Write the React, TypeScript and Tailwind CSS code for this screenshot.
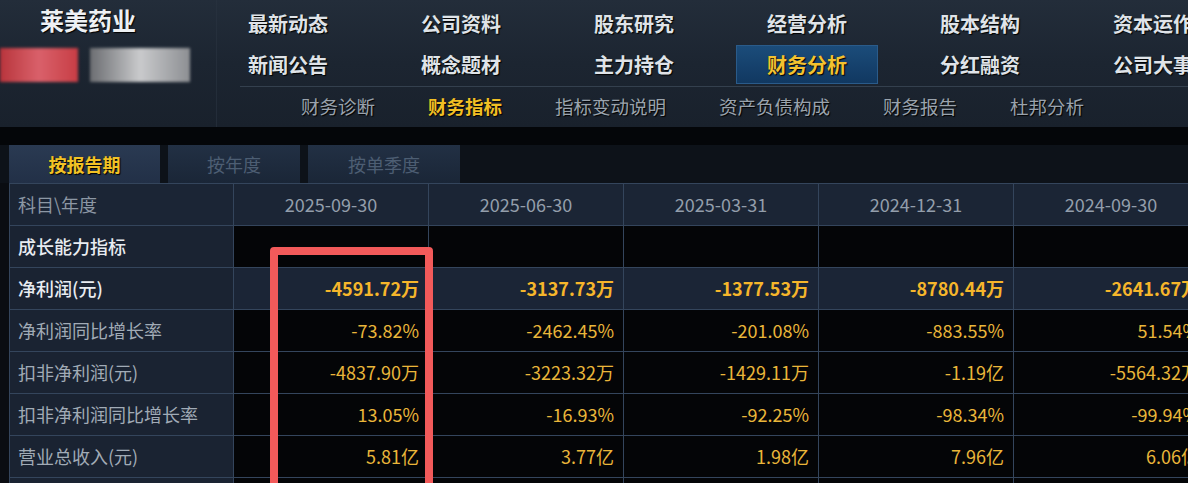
const topNav = ["最新动态", "公司资料", "股东研究", "经营分析", "股本结构", "资本运作"];
const bottomNav = ["新闻公告", "概念题材", "主力持仓", "财务分析", "分红融资", "公司大事"];
const subNav = ["财务诊断", "财务指标", "指标变动说明", "资产负债构成", "财务报告", "杜邦分析"];
const dates = ["2025-09-30", "2025-06-30", "2025-03-31", "2024-12-31", "2024-09-30"];

type Row = { label: string; values: string[]; kind: "section" | "main" | "normal" };

const rows: Row[] = [
  { label: "成长能力指标", values: ["", "", "", "", ""], kind: "section" },
  { label: "净利润(元)", values: ["-4591.72万", "-3137.73万", "-1377.53万", "-8780.44万", "-2641.67万"], kind: "main" },
  { label: "净利润同比增长率", values: ["-73.82%", "-2462.45%", "-201.08%", "-883.55%", "51.54%"], kind: "normal" },
  { label: "扣非净利润(元)", values: ["-4837.90万", "-3223.32万", "-1429.11万", "-1.19亿", "-5564.32万"], kind: "normal" },
  { label: "扣非净利润同比增长率", values: ["13.05%", "-16.93%", "-92.25%", "-98.34%", "-99.94%"], kind: "normal" },
  { label: "营业总收入(元)", values: ["5.81亿", "3.77亿", "1.98亿", "7.96亿", "6.06亿"], kind: "normal" },
  { label: "", values: ["", "", "", "", ""], kind: "normal" },
];

const font = "font-['Noto_Sans_CJK_SC','Noto_Sans',sans-serif]";
const shadow = "[text-shadow:1px_1px_1px_#000]";

function Header() {
  return (
    <div className="h-[127px] flex bg-gradient-to-b from-[#232d3a] via-[#1c2531] to-[#19212c]">
      <div className="w-[217px] shrink-0 border-r border-[#2a3441]/60">
        <div className={`pl-[40px] pt-[5px] text-[24px] leading-[30px] font-bold text-[#eef1f4] ${shadow}`}>
          莱美药业
        </div>
        <div className="mt-[13px] flex gap-[12px]">
          <div className="w-[78px] h-[34px] bg-gradient-to-r from-[#b8343c] via-[#d9606a] to-[#c73c44] blur-[1.5px]" />
          <div className="w-[100px] h-[34px] bg-gradient-to-r from-[#6c6e72] via-[#c9cacc] to-[#8d8f93] blur-[1.5px]" />
        </div>
      </div>
      <div className="flex-1 flex flex-col min-w-0">
        <div className="h-[45px] grid grid-cols-[repeat(6,142px)] gap-x-[31px] items-center pt-[2px]">
          {topNav.map((t) => (
            <div key={t} className={`text-center text-[20px] font-bold text-[#dfe3e8] ${shadow} whitespace-nowrap`}>
              {t}
            </div>
          ))}
        </div>
        <div className="h-[41px] grid grid-cols-[repeat(6,142px)] gap-x-[31px]">
          {bottomNav.map((t) => {
            const active = t === "财务分析";
            return (
              <div
                key={t}
                className={`h-[39px] flex items-center justify-center text-[20px] font-bold whitespace-nowrap ${shadow} ${
                  active
                    ? "bg-gradient-to-b from-[#1b4c7a] to-[#113861] border border-[#2a5b8a] text-[#f3c230]"
                    : "text-[#dfe3e8]"
                }`}
              >
                {t}
              </div>
            );
          })}
        </div>
        <div className="ml-[23px] h-px bg-[#34404e]" />
        <div className="flex-1 flex items-center pl-[84px] gap-[53px]">
          {subNav.map((t) => {
            const active = t === "财务指标";
            return (
              <div
                key={t}
                className={`text-[18.5px] whitespace-nowrap ${shadow} ${
                  active ? "text-[#f1bf24] font-bold" : "text-[#9aa3ad]"
                }`}
              >
                {t}
              </div>
            );
          })}
        </div>
      </div>
    </div>
  );
}

function Tabs() {
  const tabs = [
    { t: "按报告期", w: "w-[151px]", active: true },
    { t: "按年度", w: "w-[132px]", active: false },
    { t: "按单季度", w: "w-[152px]", active: false },
  ];
  return (
    <div className="h-[38px] flex gap-[8px] pl-[9px] bg-[#0d1219]">
      {tabs.map((tab) => (
        <div
          key={tab.t}
          className={`${tab.w} flex items-center justify-center text-[18px] ${
            tab.active
              ? `bg-gradient-to-b from-[#2a3a52] to-[#223047] text-[#f2c225] font-bold ${shadow}`
              : "bg-gradient-to-b from-[#223044] to-[#1a2637] text-[#4d5e73]"
          }`}
        >
          {tab.t}
        </div>
      ))}
    </div>
  );
}

function Table() {
  const cell = "border-r border-b border-[#34455c] h-[42px] shrink-0";
  return (
    <div className="pl-[9px]">
      <div className="flex border-t border-l border-[#34455c] w-max">
        <div className={`${cell} w-[224px] bg-[#1b2535] flex items-center pl-[8px] text-[18px] text-[#8c97a4]`}>
          科目\年度
        </div>
        {dates.map((d) => (
          <div
            key={d}
            className={`${cell} w-[195px] bg-[#1b2535] flex items-center justify-center text-[18px] text-[#939eab]`}
          >
            {d}
          </div>
        ))}
      </div>
      {rows.map((r, i) => (
        <div key={i} className="flex border-l border-[#34455c] w-max">
          <div
            className={`${cell} w-[224px] bg-[#1a2332] flex items-center pl-[8px] text-[18px] whitespace-nowrap ${
              r.kind === "normal" ? "text-[#a1abb6]" : "text-[#e8ecf1] font-medium"
            }`}
          >
            {r.label}
          </div>
          {r.values.map((v, j) => (
            <div
              key={j}
              className={`${cell} w-[195px] flex items-center justify-end pr-[9px] whitespace-nowrap ${
                r.kind === "main"
                  ? "bg-[#1b2536] text-[#f6b62b] font-bold text-[18px]"
                  : "bg-[#040507] text-[#eab63a] text-[18px]"
              }`}
            >
              {v}
            </div>
          ))}
        </div>
      ))}
    </div>
  );
}

export default function App() {
  return (
    <div className={`relative w-[1188px] h-[483px] overflow-hidden bg-[#0a0d12] ${font}`}>
      <Header />
      <div className="h-[18px] bg-[#040609]" />
      <Tabs />
      <Table />
      <div className="absolute left-[270px] top-[247px] w-[163px] h-[280px] border-[8px] border-[#f25a5a] rounded-[4px]" />
    </div>
  );
}
